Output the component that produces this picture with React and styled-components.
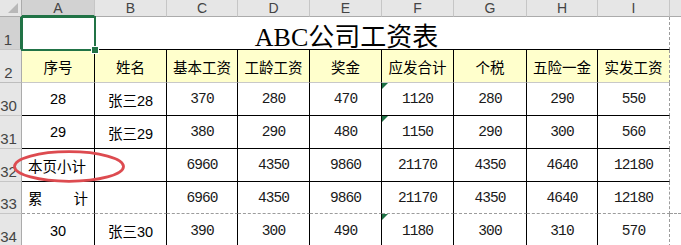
import React from 'react';
import styled, { createGlobalStyle } from 'styled-components';

const GlobalStyle = createGlobalStyle`
    body {
        margin: 0;
        background: #ffffff;
        font-family: "Liberation Sans", "Noto Sans CJK SC", sans-serif;
    }
`;

const columns = ['A', 'B', 'C', 'D', 'E', 'F', 'G', 'H', 'I'];
const headers = ['序号', '姓名', '基本工资', '工龄工资', '奖金', '应发合计', '个税', '五险一金', '实发工资'];

const rows = [
    { num: 30, line: 'solid', flag: true, cells: ['28', '张三28', '370', '280', '470', '1120', '280', '290', '550'] },
    { num: 31, line: 'solid', flag: true, cells: ['29', '张三29', '380', '290', '480', '1150', '290', '300', '560'] },
    { num: 32, line: 'solid', label: '本页小计', cells: ['', '', '6960', '4350', '9860', '21170', '4350', '4640', '12180'] },
    { num: 33, line: 'dashed', spread: ['累', '计'], cells: ['', '', '6960', '4350', '9860', '21170', '4350', '4640', '12180'] },
    { num: 34, line: 'none', flag: true, cells: ['30', '张三30', '390', '300', '490', '1180', '300', '310', '570'] },
];

const App = () => {
    return (
        <>
            <GlobalStyle />
            <Sheet>
                <Corner>
                    <CornerMark />
                </Corner>
                {columns.map((c) => (
                    <ColHead key={c} $active={c === 'A'}>
                        {c}
                    </ColHead>
                ))}
                <ColHead $last />

                <RowHead $active>1</RowHead>
                <TitleCell>ABC公司工资表</TitleCell>
                <Filler />

                <RowHead $line="light">2</RowHead>
                {headers.map((t, i) => (
                    <HeadCell key={t} $last={i === 8}>
                        {t}
                    </HeadCell>
                ))}
                <Filler />

                {rows.map((r) => (
                    <React.Fragment key={r.num}>
                        <RowHead>{r.num}</RowHead>
                        {r.cells.map((v, i) => {
                            if (i === 0 && r.label) {
                                return (
                                    <Cell key={i} $line={r.line} $align="flex-start">
                                        <CjkText>{r.label}</CjkText>
                                    </Cell>
                                );
                            }
                            if (i === 0 && r.spread) {
                                return (
                                    <Cell key={i} $line={r.line} $align="space-between">
                                        <CjkText>{r.spread[0]}</CjkText>
                                        <CjkText>{r.spread[1]}</CjkText>
                                    </Cell>
                                );
                            }
                            return (
                                <Cell key={i} $line={r.line} $last={i === 8}>
                                    {i === 5 && r.flag && <TextFlag />}
                                    {i < 2 ? <SansText>{v}</SansText> : <NumText>{v}</NumText>}
                                </Cell>
                            );
                        })}
                        <Filler $line={r.line} />
                    </React.Fragment>
                ))}

                <Selection>
                    <Handle />
                </Selection>
                <Circle width="114" height="36" viewBox="0 0 114 36">
                    <ellipse cx="57" cy="17.5" rx="54.5" ry="14.8" fill="none" stroke="#dd4b50" strokeWidth="2.8" />
                </Circle>
            </Sheet>
        </>
    );
};

export default App;

const Sheet = styled.div`
    position: relative;
    width: 681px;
    height: 245px;
    overflow: hidden;
    display: grid;
    grid-template-columns: 22px 73px 72px 71px 72px 72px 72px 73px 71px 72px 1fr;
    grid-template-rows: 17px 33px 33px 33px 33px 33px 32px 33px;
`;

const Corner = styled.div`
    position: relative;
    background: #e6e6e6;
    border-right: 1px solid #ababab;
    border-bottom: 1px solid #ababab;
    box-sizing: border-box;
`;

const CornerMark = styled.div`
    position: absolute;
    right: 3px;
    bottom: 3px;
    width: 0;
    height: 0;
    border-left: 10px solid transparent;
    border-bottom: 10px solid #b8b8b8;
`;

const ColHead = styled.div`
    box-sizing: border-box;
    display: flex;
    align-items: center;
    justify-content: center;
    font-family: "Liberation Sans", sans-serif;
    font-size: 14px;
    color: #444444;
    background: ${(p) => (p.$active ? '#d2d2d2' : '#e6e6e6')};
    border-right: ${(p) => (p.$last ? 'none' : '1px solid #c6c6c6')};
    border-bottom: ${(p) => (p.$active ? '2px solid #217346' : '1px solid #ababab')};
`;

const RowHead = styled.div`
    box-sizing: border-box;
    display: flex;
    align-items: flex-end;
    justify-content: center;
    padding: 0 4px 2px 0;
    font-family: "Liberation Sans", sans-serif;
    font-size: 15px;
    line-height: 1;
    color: #444444;
    background: ${(p) => (p.$active ? '#d2d2d2' : '#e6e6e6')};
    border-right: ${(p) => (p.$active ? '2px solid #217346' : '1px solid #ababab')};
    border-bottom: 1px solid ${(p) => (p.$line === 'light' ? '#bdbdbd' : '#c6c6c6')};
`;

const TitleCell = styled.div`
    grid-column: span 9;
    box-sizing: border-box;
    display: flex;
    align-items: center;
    justify-content: center;
    padding: 2px 0 0 2px;
    font-family: "Liberation Serif", "Noto Sans CJK SC", serif;
    font-size: 26px;
    color: #000000;
    border-right: 1px dashed #9c9c9c;
    border-bottom: 1px solid #000000;
`;

const HeadCell = styled.div`
    box-sizing: border-box;
    display: flex;
    align-items: center;
    justify-content: center;
    background: #ffffcc;
    font-family: "Noto Sans CJK SC", sans-serif;
    font-size: 14.5px;
    color: #000000;
    border-right: ${(p) => (p.$last ? '1px dashed #9c9c9c' : '1px solid #000000')};
    border-bottom: 1px solid #c8c8c8;
`;

const lineFor = (line) => {
    if (line === 'solid') return '1px solid #000000';
    if (line === 'dashed') return '1px dashed #9c9c9c';
    return 'none';
};

const Cell = styled.div`
    position: relative;
    box-sizing: border-box;
    display: flex;
    align-items: center;
    justify-content: ${(p) => p.$align || 'center'};
    padding: 0 6px;
    color: #000000;
    border-right: ${(p) => (p.$last ? '1px dashed #9c9c9c' : '1px solid #000000')};
    border-bottom: ${(p) => lineFor(p.$line)};
`;

const Filler = styled.div`
    box-sizing: border-box;
    border-bottom: ${(p) => (p.$line === 'dashed' ? '1px dashed #9c9c9c' : 'none')};
`;

const CjkText = styled.span`
    font-family: "Noto Sans CJK SC", sans-serif;
    font-size: 14.5px;
`;

const SansText = styled.span`
    font-family: "Liberation Sans", "Noto Sans CJK SC", sans-serif;
    font-size: 14.5px;
`;

const NumText = styled.span`
    font-family: "Liberation Mono", monospace;
    font-size: 14.5px;
    letter-spacing: -0.9px;
    color: #1a1a1a;
`;

const TextFlag = styled.div`
    position: absolute;
    top: 0;
    left: 0;
    width: 0;
    height: 0;
    border-top: 6px solid #1e7145;
    border-right: 6px solid transparent;
`;

const Selection = styled.div`
    position: absolute;
    left: 21px;
    top: 16px;
    width: 75px;
    height: 35px;
    box-sizing: border-box;
    border: 2px solid #217346;
    pointer-events: none;
`;

const Handle = styled.div`
    position: absolute;
    right: -5px;
    bottom: -5px;
    width: 6px;
    height: 6px;
    background: #217346;
    border: 1px solid #ffffff;
`;

const Circle = styled.svg`
    position: absolute;
    left: 12px;
    top: 149px;
    pointer-events: none;
`;
